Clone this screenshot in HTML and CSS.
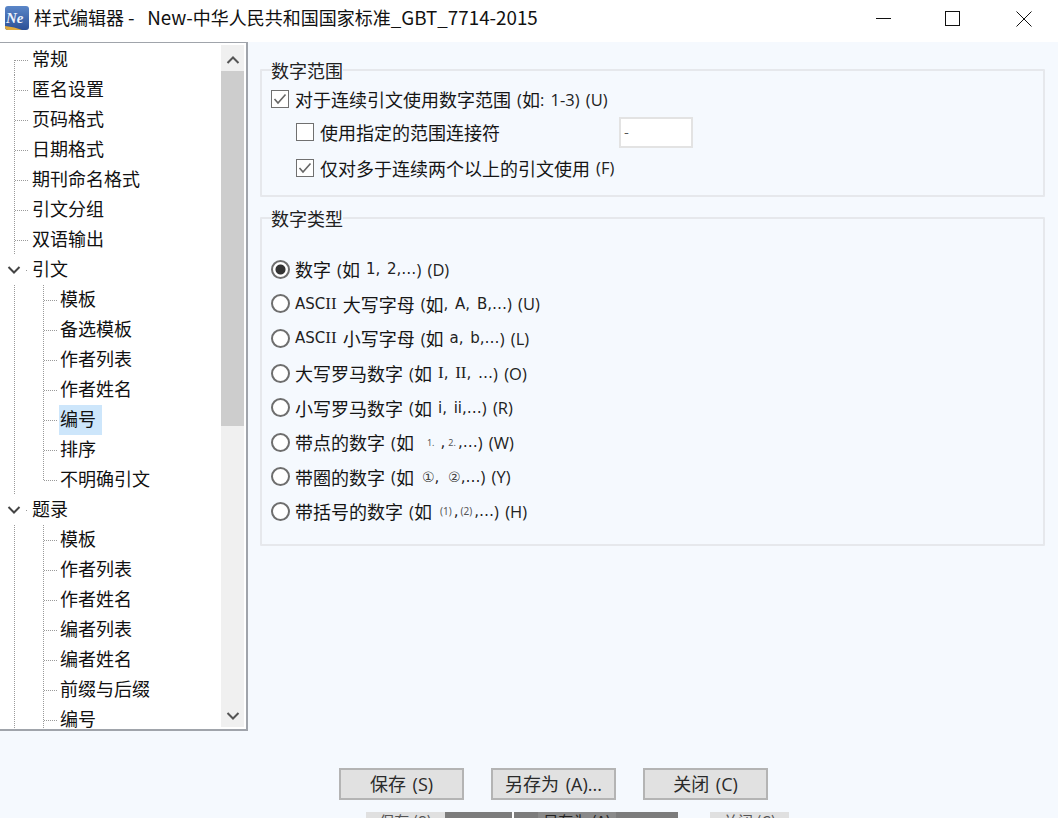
FILE: index.html
```html
<!DOCTYPE html>
<html lang="zh">
<head>
<meta charset="utf-8">
<title>样式编辑器</title>
<link rel="stylesheet" href="styles.css">
</head>
<body>
<div class="window">
  <header class="titlebar">
    <svg class="app-icon" viewBox="0 0 24 24" width="24" height="24"><defs><linearGradient id="g" x1="0" y1="0" x2="0" y2="1"><stop offset="0" stop-color="#5a86c8"/><stop offset="1" stop-color="#2c4f96"/></linearGradient></defs><rect width="24" height="24" rx="3" fill="url(#g)"/><path d="M0 20Q10 21 17 24H3Q0 24 0 21Z" fill="#e0a93c"/><text x="1" y="17" class="app-icon-text">Ne</text></svg>
    <div class="title">样式编辑器 <span class="tl">-&nbsp;&nbsp; New-</span>中华人民共和国国家标准<span class="tl">_GBT_7714-2015</span></div>
    <div class="win-controls">
      <svg class="win-btn" width="16" height="16" viewBox="0 0 16 16"><path d="M0 7.5H15" stroke="#111" fill="none"/></svg>
      <svg class="win-btn win-max" width="16" height="16" viewBox="0 0 16 16"><rect x="0.5" y="0.5" width="14" height="14" stroke="#111" fill="none"/></svg>
      <svg class="win-btn" width="16" height="16" viewBox="0 0 16 16"><path d="M0.5 0.5L15.5 15.5M15.5 0.5L0.5 15.5" stroke="#111" fill="none"/></svg>
    </div>
  </header>
  <main class="main">
    <nav class="tree">
      <div class="tree-list">
        <div class="row l0 first">常规</div>
        <div class="row l0">匿名设置</div>
        <div class="row l0">页码格式</div>
        <div class="row l0">日期格式</div>
        <div class="row l0">期刊命名格式</div>
        <div class="row l0">引文分组</div>
        <div class="row l0">双语输出</div>
        <div class="row parent"><svg class="chev" width="14" height="8" viewBox="0 0 14 8"><path d="M1.5 1L7 6.5L12.5 1" stroke="#444" stroke-width="2" fill="none"/></svg>引文</div>
        <div class="row l1">模板</div>
        <div class="row l1">备选模板</div>
        <div class="row l1">作者列表</div>
        <div class="row l1">作者姓名</div>
        <div class="row l1"><span class="sel">编号</span></div>
        <div class="row l1">排序</div>
        <div class="row l1 last">不明确引文</div>
        <div class="row parent"><svg class="chev" width="14" height="8" viewBox="0 0 14 8"><path d="M1.5 1L7 6.5L12.5 1" stroke="#444" stroke-width="2" fill="none"/></svg>题录</div>
        <div class="row l1">模板</div>
        <div class="row l1">作者列表</div>
        <div class="row l1">作者姓名</div>
        <div class="row l1">编者列表</div>
        <div class="row l1">编者姓名</div>
        <div class="row l1">前缀与后缀</div>
        <div class="row l1">编号</div>
      </div>
      <div class="scrollbar">
        <svg class="sb-arrow" width="14" height="8" viewBox="0 0 14 8"><path d="M1.5 7L7 1.5L12.5 7" stroke="#555" stroke-width="2" fill="none"/></svg>
        <div class="thumb"></div>
        <div class="sb-track"></div>
        <svg class="sb-arrow" width="14" height="8" viewBox="0 0 14 8"><path d="M1.5 1L7 6.5L12.5 1" stroke="#555" stroke-width="2" fill="none"/></svg>
      </div>
    </nav>
    <section class="content">
      <fieldset class="group g-range">
        <legend>数字范围</legend>
        <div class="opt o-main"><svg class="box" width="18" height="18" viewBox="0 0 18 18"><rect x="0.5" y="0.5" width="17" height="17" fill="#fff" stroke="#707070"/><path d="M3.5 9L7 13L14.5 4.5" stroke="#666" stroke-width="1.6" fill="none"/></svg>对于连续引文使用数字范围 <span class="lat">(</span>如<span class="lat">: 1-3) (U)</span></div>
        <div class="opt o-sub o-sep"><svg class="box" width="18" height="18" viewBox="0 0 18 18"><rect x="0.5" y="0.5" width="17" height="17" fill="#fff" stroke="#707070"/></svg><span class="sep-label">使用指定的范围连接符</span><span class="sep-input">-</span></div>
        <div class="opt o-sub"><svg class="box" width="18" height="18" viewBox="0 0 18 18"><rect x="0.5" y="0.5" width="17" height="17" fill="#fff" stroke="#707070"/><path d="M3.5 9L7 13L14.5 4.5" stroke="#666" stroke-width="1.6" fill="none"/></svg>仅对多于连续两个以上的引文使用 <span class="lat">(F)</span></div>
      </fieldset>
      <fieldset class="group g-type">
        <legend>数字类型</legend>
        <div class="radio"><span class="dot on"></span>数字 <span class="lat">(</span>如 <span class="ex">1, 2,…</span><span class="lat">) (D)</span></div>
        <div class="radio"><span class="dot"></span><span class="ex">ASC<span class="si">II</span></span> 大写字母 <span class="lat">(</span>如<span class="ex">, A, B,…</span><span class="lat">) (U)</span></div>
        <div class="radio"><span class="dot"></span><span class="ex">ASC<span class="si">II</span></span> 小写字母 <span class="lat">(</span>如 <span class="ex">a, b,…</span><span class="lat">) (L)</span></div>
        <div class="radio"><span class="dot"></span>大写罗马数字 <span class="lat">(</span>如 <span class="ex"><span class="si">I</span>, <span class="si">II</span>, …</span><span class="lat">) (O)</span></div>
        <div class="radio"><span class="dot"></span>小写罗马数字 <span class="lat">(</span>如 <span class="ex">i, ii,…</span><span class="lat">) (R)</span></div>
        <div class="radio"><span class="dot"></span>带点的数字 <span class="lat">(</span>如 <span class="tiny t-dot">1.</span><span class="ex">,</span> <span class="tiny t-dot2">2.</span><span class="ex">,…</span><span class="lat">) (W)</span></div>
        <div class="radio"><span class="dot"></span>带圈的数字 <span class="lat">(</span>如 <span class="circ">①</span><span class="ex">, </span><span class="circ">②</span><span class="ex">,…</span><span class="lat">) (Y)</span></div>
        <div class="radio"><span class="dot"></span>带括号的数字 <span class="lat">(</span>如 <span class="tiny t-par">(1)</span><span class="ex">,</span> <span class="tiny t-par">(2)</span><span class="ex">,…</span><span class="lat">) (H)</span></div>
      </fieldset>
    </section>
  </main>
  <footer class="footer">
    <button class="btn">保存 (S)</button>
    <button class="btn">另存为 (A)...</button>
    <button class="btn">关闭 (C)</button>
  </footer>
  <div class="strip">
    <div class="strip-a"><span class="ghost g1">保存 (S)</span><span class="gray g2"></span><span class="gap"></span><span class="gray g3"></span><span class="ghost g4">另存为 (A)</span><span class="gray g5"></span><span class="clear"></span><span class="ghost g6">关闭 (C)</span></div>
  </div>
</div>
</body>
</html>
```
FILE: styles.css
```css
* { box-sizing: border-box; }
html, body { margin: 0; padding: 0; }
body {
  width: 1058px;
  height: 818px;
  overflow: hidden;
  font-family: "Noto Sans CJK SC", "Noto Sans", sans-serif;
  font-size: 18px;
  color: #1c1c1c;
  background: #f5f9fe;
}
.window { display: flex; flex-direction: column; height: 818px; }

.titlebar {
  height: 42px;
  flex: none;
  background: #fff;
  display: flex;
  align-items: center;
  padding-left: 5px;
}
.app-icon { flex: none; margin-top: -6px; }
.app-icon-text { font: italic bold 15px "Liberation Serif", serif; fill: #eef3fc; }
.title { margin-left: 5px; margin-top: -9px; color: #111; line-height: 24px; white-space: nowrap; }
.tl { font-size: 18.8px; }
.win-controls { margin-left: auto; display: flex; margin-top: -4px; padding-right: 26px; gap: 54px; }
.win-btn { display: block; }
.win-max { margin-left: -1px; margin-right: 1px; }

.main { display: flex; height: 689px; flex: none; }
.tree {
  width: 248px;
  height: 689px;
  flex: none;
  background: #fff;
  border: 1px solid #a0a4ab;
  border-width: 1px 2px 2px 0;
  display: flex;
  padding-top: 2px;
  overflow: hidden;
}
.tree-list { width: 221px; flex: none; height: 684px; overflow: hidden; }
.row {
  height: 30px;
  line-height: 26px;
  padding-bottom: 4px;
  white-space: nowrap;
  color: #111;
  background-repeat: no-repeat;
  display: flex;
  align-items: center;
}
.l0 {
  padding-left: 32px;
  background-image:
    repeating-linear-gradient(to bottom, #9a9a9a 0 1px, transparent 1px 2px),
    repeating-linear-gradient(to right, #9a9a9a 0 1px, transparent 1px 2px);
  background-size: 1px 30px, 13px 1px;
  background-position: 14px 0, 15px 15px;
}
.l0.first { background-size: 1px 15px, 13px 1px; background-position: 14px 15px, 15px 15px; }
.l1 {
  padding-left: 60px;
  background-image:
    repeating-linear-gradient(to bottom, #9a9a9a 0 1px, transparent 1px 2px),
    repeating-linear-gradient(to bottom, #9a9a9a 0 1px, transparent 1px 2px),
    repeating-linear-gradient(to right, #9a9a9a 0 1px, transparent 1px 2px);
  background-size: 1px 30px, 1px 30px, 13px 1px;
  background-position: 14px 0, 43px 0, 44px 15px;
}
.l1.last { background-size: 1px 30px, 1px 15px, 13px 1px; }
.parent {
  padding-left: 7px;
  background-image: repeating-linear-gradient(to right, #9a9a9a 0 1px, transparent 1px 2px);
  background-size: 2px 1px;
  background-position: 26px 15px;
}
.chev { flex: none; margin-right: 11px; margin-top: 4px; }
.sel {
  background: #cde6fb;
  margin-left: -1px;
  padding-left: 1px;
  height: 30px;
  display: block;
  width: 43px;
  align-self: flex-start;
}

.scrollbar {
  width: 23px;
  flex: none;
  background: #f0f0f0;
  display: flex;
  flex-direction: column;
  align-items: center;
  height: 682px;
}
.sb-arrow { flex: none; margin: 11px 0 7px; }
.thumb { width: 23px; height: 355px; background: #cdcdcd; flex: none; }
.sb-track { flex: 1; }

.content { flex: 1; padding: 0 13px 0 12px; min-width: 0; }
.group {
  margin: 0;
  border: 2px solid #e6e8ec;
  border-radius: 1px;
  padding: 0;
  min-width: 0;
}
.group legend {
  padding: 0;
  margin-left: 0;
  line-height: 24px;
  color: #222;
}
.g-range { margin-top: 16px; height: 139px; padding: 7px 0 0 9px; }
.g-type { margin-top: 9px; height: 340px; padding: 22px 0 0 9px; }

.opt { display: flex; align-items: center; white-space: pre; height: 36px; color: #151515; word-spacing: 2px; }
.o-main { height: 24px; margin-top: -2px; }
.o-sub { padding-left: 25px; height: 35px; }
.o-sep { margin-top: 3px; height: 36px; }
.box { flex: none; margin-right: 6px; }
.sep-label { width: 299px; flex: none; }
.sep-input {
  width: 74px;
  height: 31px;
  flex: none;
  background: #fff;
  border: 2px solid #e3e3e3;
  font-size: 14px;
  line-height: 25px;
  padding-left: 3px;
  color: #555;
}
.lat { font-family: "Open Sans", "Noto Sans", sans-serif; font-size: 16.5px; color: #222; }
.ex { font-family: "DejaVu Sans", sans-serif; font-size: 15px; color: #222; }
.si { font-family: "Liberation Serif", serif; font-size: 17px; }
.tiny { font-family: "Noto Sans", sans-serif; font-size: 9px; color: #555; margin: 0 4px 0 1px; }
.t-dot { margin-left: 7px; margin-right: 6px; }
.t-dot2 { margin-left: 3px; margin-right: 2px; }
.t-par { font-size: 10px; margin-left: 2px; margin-right: 2px; }
.circ { font-size: 14px; color: #444; font-family: "DejaVu Sans", sans-serif; margin-left: 2px; }

.radio { display: flex; align-items: center; white-space: pre; height: 34.6px; color: #151515; word-spacing: 2px; }
.dot {
  width: 19px;
  height: 19px;
  flex: none;
  border-radius: 50%;
  border: 2px solid #6e6e6e;
  background: #fff;
  margin-right: 5px;
}
.dot.on { background: radial-gradient(circle, #333 0 4.5px, #fff 5.5px); }

.footer {
  height: 81px;
  flex: none;
  display: flex;
  padding: 37px 0 0 339px;
  gap: 27px;
  align-items: flex-start;
}
.btn {
  width: 125px;
  height: 32px;
  background: #e1e1e1;
  border: 2px solid #b4b4b4;
  font: 18px/26px "Open Sans", "Noto Sans CJK SC", sans-serif;
  color: #2a2a2a;
  padding: 0;
  word-spacing: 2px;
}

.strip { height: 6px; flex: none; overflow: hidden; }
.strip-a { display: flex; height: 6px; padding-left: 366px; align-items: stretch; }
.ghost {
  background: #e0e0e0;
  font-size: 15px;
  line-height: 18px;
  color: #555;
  text-align: center;
  overflow: hidden;
  display: block;
  white-space: nowrap;
}
.gray { background: #7c7c7c; display: block; }
.gap { width: 2px; background: #fff; display: block; }
.g1 { width: 79px; }
.g2 { width: 67px; }
.g3 { width: 24px; }
.g4 { width: 78px; background: #8a8a8a; color: #222; }
.g5 { width: 62px; }
.clear { width: 32px; display: block; }
.g6 { width: 79px; }
```
